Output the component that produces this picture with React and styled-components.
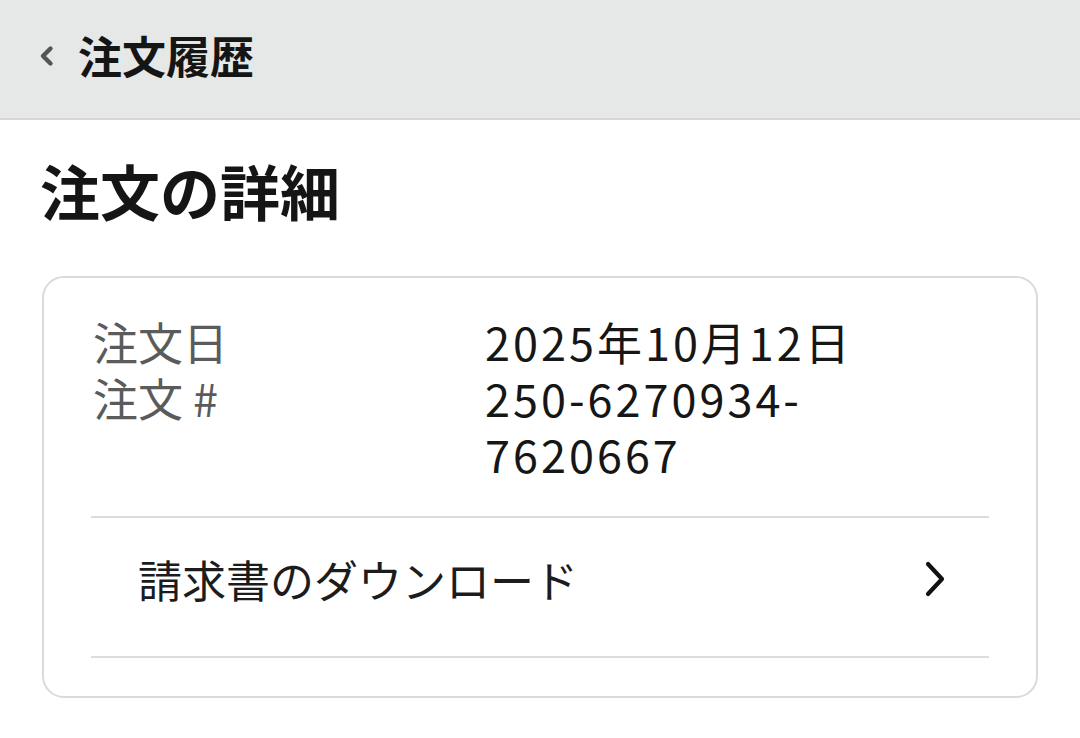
import React from 'react';
import styled, { createGlobalStyle } from 'styled-components';

const Global = createGlobalStyle`
  body {
    margin: 0;
    background: #fff;
    font-family: "Noto Sans CJK JP", "Noto Sans", sans-serif;
    color: #111;
  }
`;

const Header = styled.header`
  height: 118px;
  background: #e6e7e7;
  border-bottom: 2px solid #d5d6d6;
  display: flex;
  align-items: center;
  padding-left: 38px;
  gap: 24px;
`;

const BackIcon = styled.svg`
  width: 16px;
  height: 22px;
  margin-top: -6px;
`;

const HeaderTitle = styled.h1`
  margin: 0;
  font-size: 44px;
  font-weight: 700;
  line-height: 1;
  color: #151515;
  margin-top: -8px;
`;

const Heading = styled.h2`
  margin: 34px 0 0 40px;
  font-size: 60px;
  font-weight: 700;
  line-height: 72px;
  color: #151515;
`;

const Card = styled.section`
  margin: 50px 0 0 42px;
  border: 2px solid #dadada;
  border-radius: 22px;
  padding: 36px 47px 38px;
  box-sizing: border-box;
  width: 996px;
`;

const InfoGrid = styled.dl`
  margin: 0 0 34px 2px;
  display: grid;
  grid-template-columns: 392px 460px;
  font-size: 45px;
  line-height: 56px;
`;

const Label = styled.dt`
  color: #5b5b5b;
  grid-column: 1;
`;

const Value = styled.dd`
  margin: 0;
  color: #161616;
  grid-column: 2;
  letter-spacing: 3px;
  word-break: break-word;
`;

const Divider = styled.hr`
  margin: 0;
  border: none;
  border-top: 2px solid #dcdcdc;
`;

const LinkRow = styled.a`
  display: flex;
  align-items: center;
  justify-content: space-between;
  height: 138px;
  padding: 0 42px 16px 47px;
  box-sizing: border-box;
  color: #1c1c1c;
  text-decoration: none;
  font-size: 44px;
  cursor: pointer;
`;

const ChevronIcon = styled.svg`
  width: 24px;
  height: 36px;
`;

export default function App() {
  return (
    <>
      <Global />
      <Header>
        <BackIcon viewBox="0 0 16 22">
          <polyline points="12.5,3.5 5,11 12.5,18.5" fill="none" stroke="#555" strokeWidth="4.4" strokeLinecap="round" strokeLinejoin="round" />
        </BackIcon>
        <HeaderTitle>注文履歴</HeaderTitle>
      </Header>
      <Heading>注文の詳細</Heading>
      <Card>
        <InfoGrid>
          <Label>注文日</Label>
          <Value>2025年10月12日</Value>
          <Label>注文 #</Label>
          <Value>250-6270934-7620667</Value>
        </InfoGrid>
        <Divider />
        <LinkRow>
          請求書のダウンロード
          <ChevronIcon viewBox="0 0 24 36">
            <polyline points="5,3 19,18 5,33" fill="none" stroke="#111" strokeWidth="4.2" strokeLinecap="round" strokeLinejoin="round" />
          </ChevronIcon>
        </LinkRow>
        <Divider />
      </Card>
    </>
  );
}
